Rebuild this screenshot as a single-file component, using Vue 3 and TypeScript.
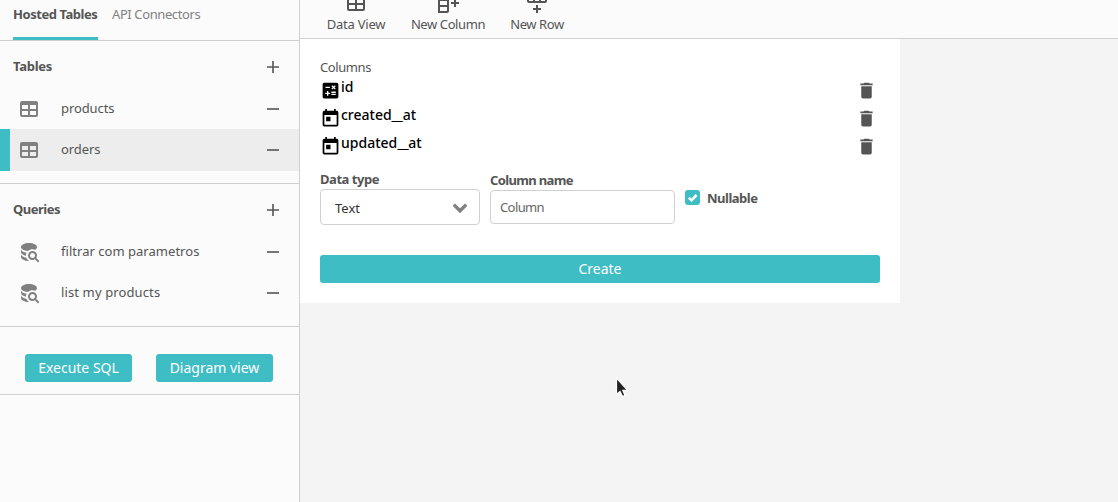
<script setup lang="ts">
import { ref } from 'vue'

const tablePath = 'M5,4H19A2,2 0 0,1 21,6V18A2,2 0 0,1 19,20H5A2,2 0 0,1 3,18V6A2,2 0 0,1 5,4M5,8V12H11V8H5M13,8V12H19V8H13M5,14V18H11V14H5M13,14V18H19V14H13Z'
const searchPath = 'M12,3C7.58,3 4,4.79 4,7C4,9.1 7,10.7 11,11C12.2,9.8 13.8,9.2 15.5,9.2C16.4,9.2 17.4,9.4 18.2,9.7C19.3,9 20,8.1 20,7C20,4.79 16.42,3 12,3M18.68,12.32C16.92,10.56 14.07,10.57 12.32,12.33C10.56,14.09 10.56,16.94 12.32,18.69C13.81,20.17 16.11,20.43 17.89,19.32L21,22.39L22.39,21L19.3,17.89C20.43,16.12 20.17,13.8 18.68,12.32M17.27,17.27C16.29,18.25 14.71,18.24 13.73,17.27C12.76,16.29 12.76,14.71 13.74,13.73C14.71,12.76 16.29,12.76 17.27,13.73C18.24,14.71 18.24,16.29 17.27,17.27M10.9,20.1C10.25,19.44 9.74,18.65 9.42,17.78C6.27,17.25 4,15.76 4,14V17C4,19.21 7.58,21 12,21C11.6,20.74 11.23,20.44 10.9,20.1M4,9V12C4,13.68 6.07,15.12 9,15.7V15.5C9,14.57 9.2,13.65 9.58,12.81C6.34,12.3 4,10.79 4,9Z'
const calcPath = 'M19 3H5c-1.1 0-2 .9-2 2v14c0 1.1.9 2 2 2h14c1.1 0 2-.9 2-2V5c0-1.1-.9-2-2-2zm-5.97 4.06L14.09 6l1.41 1.41L16.91 6l1.06 1.06-1.41 1.41 1.41 1.41-1.06 1.06-1.41-1.4-1.41 1.41-1.06-1.06 1.41-1.41-1.41-1.42zm-6.78.66h5v1.5h-5v-1.5zM11.5 16h-2v2H8v-2H6v-1.5h2v-2h1.5v2h2V16zm6.5 1.25h-5v-1.5h5v1.5zm0-2.5h-5v-1.5h5v1.5z'
const datePath = 'M7,10H12V15H7M19,19H5V8H19M19,3H18V1H16V3H8V1H6V3H5C3.89,3 3,3.9 3,5V19A2,2 0 0,0 5,21H19A2,2 0 0,0 21,19V5A2,2 0 0,0 19,3Z'
const trashPath = 'M19,4H15.5L14.5,3H9.5L8.5,4H5V6H19M6,19A2,2 0 0,0 8,21H16A2,2 0 0,0 18,19V7H6V19Z'
const columnPath = 'M11,2A2,2 0 0,1 13,4V20A2,2 0 0,1 11,22H2V2H11M4,10V14H11V10H4M4,16V20H11V16H4M4,4V8H11V4H4M15,11H18V8H20V11H23V13H20V16H18V13H15V11Z'
const rowPath = 'M22,10A2,2 0 0,1 20,12H4A2,2 0 0,1 2,10V3H4V5H8V3H10V5H14V3H16V5H20V3H22V10M4,10H8V7H4V10M10,10H14V7H10V10M20,10V7H16V10H20M11,14H13V17H16V19H13V22H11V19H8V17H11V14Z'

interface Entry { name: string; key: string }
interface Group { title: string; icon: string; key: string; items: Entry[] }

const selected = ref('orders')
const groups: Group[] = [
  { title: 'Tables', key: 'tables', icon: tablePath, items: [{ name: 'products', key: 'products' }, { name: 'orders', key: 'orders' }] },
  { title: 'Queries', key: 'queries', icon: searchPath, items: [{ name: 'filtrar com parametros', key: 'filter' }, { name: 'list my products', key: 'list' }] },
]
const tools = [
  { label: 'Data View', key: 'view', icon: tablePath },
  { label: 'New Column', key: 'column', icon: columnPath },
  { label: 'New Row', key: 'row', icon: rowPath },
]
const columns = [
  { name: 'id', key: 'c-id', icon: calcPath },
  { name: 'created_at', key: 'c-created', icon: datePath },
  { name: 'updated_at', key: 'c-updated', icon: datePath },
]
// Keeps the underscores as their own parts so they can be drawn wide.
const parts = (name: string): string[] => name.split(/(_)/)
</script>

<template>
  <div class="app">
    <aside class="sidebar">
      <nav class="tabs">
        <a class="tab active"><span>Hosted Tables</span></a>
        <a class="tab"><span>API Connectors</span></a>
      </nav>
      <section v-for="g in groups" :key="g.key" class="group" :class="g.key">
        <header class="group-head">
          <h2 :class="g.key + '-title'">{{ g.title }}</h2>
          <svg class="sign" viewBox="0 0 14 14"><path d="M1 7H13M7 1V13" /></svg>
        </header>
        <div v-for="i in g.items" :key="i.key" class="entry" :class="{ selected: selected === i.key }" @click="selected = i.key">
          <svg class="icon" viewBox="0 0 24 24"><path :d="g.icon" /></svg>
          <span class="entry-name" :class="i.key">{{ i.name }}</span>
          <svg class="sign" viewBox="0 0 14 14"><path d="M1 7H13" /></svg>
        </div>
      </section>
      <div class="actions">
        <button class="btn execute"><span>Execute SQL</span></button>
        <button class="btn diagram"><span>Diagram view</span></button>
      </div>
    </aside>

    <main class="main">
      <div class="toolbar">
        <div v-for="t in tools" :key="t.key" class="tool" :class="'tool-' + t.key">
          <svg class="icon" viewBox="0 0 24 24"><path :d="t.icon" /></svg>
          <span class="tool-label">{{ t.label }}</span>
        </div>
      </div>
      <div class="card">
        <div class="caption">Columns</div>
        <div v-for="c in columns" :key="c.key" class="column">
          <svg class="small-icon" viewBox="0 0 24 24"><path :d="c.icon" /></svg>
          <span class="column-name" :class="c.key"><span v-for="(p, n) in parts(c.name)" :key="n" :class="{ underscore: p === '_' }">{{ p }}</span></span>
          <svg class="small-icon trash" viewBox="0 0 24 24"><path :d="trashPath" /></svg>
        </div>
        <div class="form">
          <div class="field type">
            <label>Data type</label>
            <div class="select">
              <span>Text</span>
              <svg viewBox="0 0 16 12"><path d="M1.8 2.6L8 8.8L14.2 2.6" /></svg>
            </div>
          </div>
          <div class="field name">
            <label>Column name</label>
            <div class="input"><span>Column</span></div>
          </div>
          <div class="check">
            <span class="box"><svg viewBox="0 0 15 15"><path d="M3.7 7.8L6.5 10.3L11.6 5" /></svg></span>
            <span class="check-label">Nullable</span>
          </div>
        </div>
        <button class="btn create"><span>Create</span></button>
      </div>
    </main>

    <svg class="pointer" viewBox="0 0 16 24"><path d="M2.5 2V18.5L6 15.4L8.6 20.5L11 19.4L8.8 14.3H13.6Z" /></svg>
  </div>
</template>

<style>
html, body { margin: 0; overflow: hidden; }
</style>
<style scoped>
* { box-sizing: border-box; }
.app { position: relative; display: flex; width: 1118px; height: 502px; overflow: hidden; background: #f4f4f4; color: #555; font-family: "Noto Sans", "Open Sans", sans-serif; font-size: 13px; line-height: 20px; white-space: nowrap; }
.sidebar { width: 300px; flex: none; background: #fbfbfb; border-right: 1px solid #d0d0d0; }
.tabs { display: flex; gap: 14px; height: 41px; padding-left: 13px; border-bottom: 1px solid #d0d0d0; }
.tab { height: 40px; padding-top: 4px; color: #818181; letter-spacing: -0.4px; }
.tab.active { width: 85px; color: #555; font-weight: 700; letter-spacing: -0.45px; border-bottom: 3px solid #3fbdc4; }
.group { height: 143px; border-bottom: 1px solid #d0d0d0; }
.group-head { display: flex; justify-content: space-between; align-items: center; height: 47px; padding: 5px 19px 0 13px; }
h2 { margin: 0; padding-bottom: 2px; font-size: 13px; line-height: 20px; font-weight: 700; letter-spacing: -0.25px; }
.queries-title { letter-spacing: -0.5px; }
.sign { width: 14px; height: 14px; fill: none; stroke: #555; stroke-width: 1.6; }
.entry { display: flex; align-items: center; height: 41px; padding: 0 19px 0 17px; }
.entry.selected { height: 42px; padding-left: 7px; background: #ededed; border-left: 10px solid #3fbdc4; }
.icon { width: 24px; height: 24px; fill: #808080; flex: none; }
.entry-name { flex: 1; margin-left: 20px; padding-bottom: 2px; letter-spacing: -0.1px; }
.filter { letter-spacing: 0.03px; }
.list { letter-spacing: 0.12px; }
.queries .entry { height: 41.5px; }
.actions { display: flex; gap: 24px; height: 68px; padding: 27px 0 0 25px; border-bottom: 1px solid #d0d0d0; }
.btn { display: block; height: 28px; padding: 0; border: 0; border-radius: 3px; background: #3fbdc4; color: #fff; font: 14px/28px "Noto Sans", sans-serif; text-align: center; }
.execute { width: 107px; }
.diagram { width: 117px; }
.main { width: 818px; }
.toolbar { display: flex; gap: 26px; height: 39px; padding-left: 27px; background: #fbfbfb; border-bottom: 1px solid #d0d0d0; }
.tool { display: flex; flex-direction: column; align-items: center; margin-top: -9px; letter-spacing: -0.4px; }
.tool .icon { fill: #555; }
.tool-label { margin-top: -1px; }
.tool-view { width: 58px; letter-spacing: -0.25px; }
.tool-column { width: 74px; }
.tool-row { width: 52px; }
.card { width: 600px; height: 264px; padding: 18px 20px 0; background: #fff; }
.caption { height: 19px; letter-spacing: -0.4px; }
.column { display: flex; height: 28px; color: #000; }
.small-icon { width: 21px; height: 21px; margin-top: 4px; flex: none; }
.trash { margin-right: 3.5px; fill: #555; }
.column-name { flex: 1; font-size: 14px; font-weight: 500; line-height: 22px; }
.underscore { display: inline-block; margin: 0 2.6px 0 2.4px; transform: scaleX(1.85); }
.form { display: flex; gap: 10px; height: 95px; padding-top: 9px; }
label { display: block; font-weight: 700; letter-spacing: -0.45px; }
.type { width: 160px; }
.name { width: 185px; padding-top: 1px; }
.name label { letter-spacing: -0.65px; }
.select { display: flex; align-items: center; justify-content: space-between; height: 36px; padding: 2px 11px 0 14px; border: 1px solid #d0d0d0; border-radius: 4px; color: #333; }
.select svg { width: 16px; height: 12px; fill: none; stroke: #808080; stroke-width: 3.4; }
.input { height: 34px; padding: 6px 9px; border: 1px solid #d0d0d0; border-radius: 4px; color: #666; letter-spacing: -0.6px; }
.check { display: flex; align-items: center; height: 15px; margin-top: 21px; gap: 7px; font-weight: 700; letter-spacing: -0.5px; }
.box { display: flex; width: 15px; height: 15px; border-radius: 3px; background: #3fbdc4; }
.box svg { fill: none; stroke: #fff; stroke-width: 2.6; }
.create { width: 560px; margin-top: 0; }
.pointer { position: absolute; left: 614px; top: 376px; width: 16px; height: 24px; fill: #222; stroke: #fff; stroke-width: 1.2; }
</style>
